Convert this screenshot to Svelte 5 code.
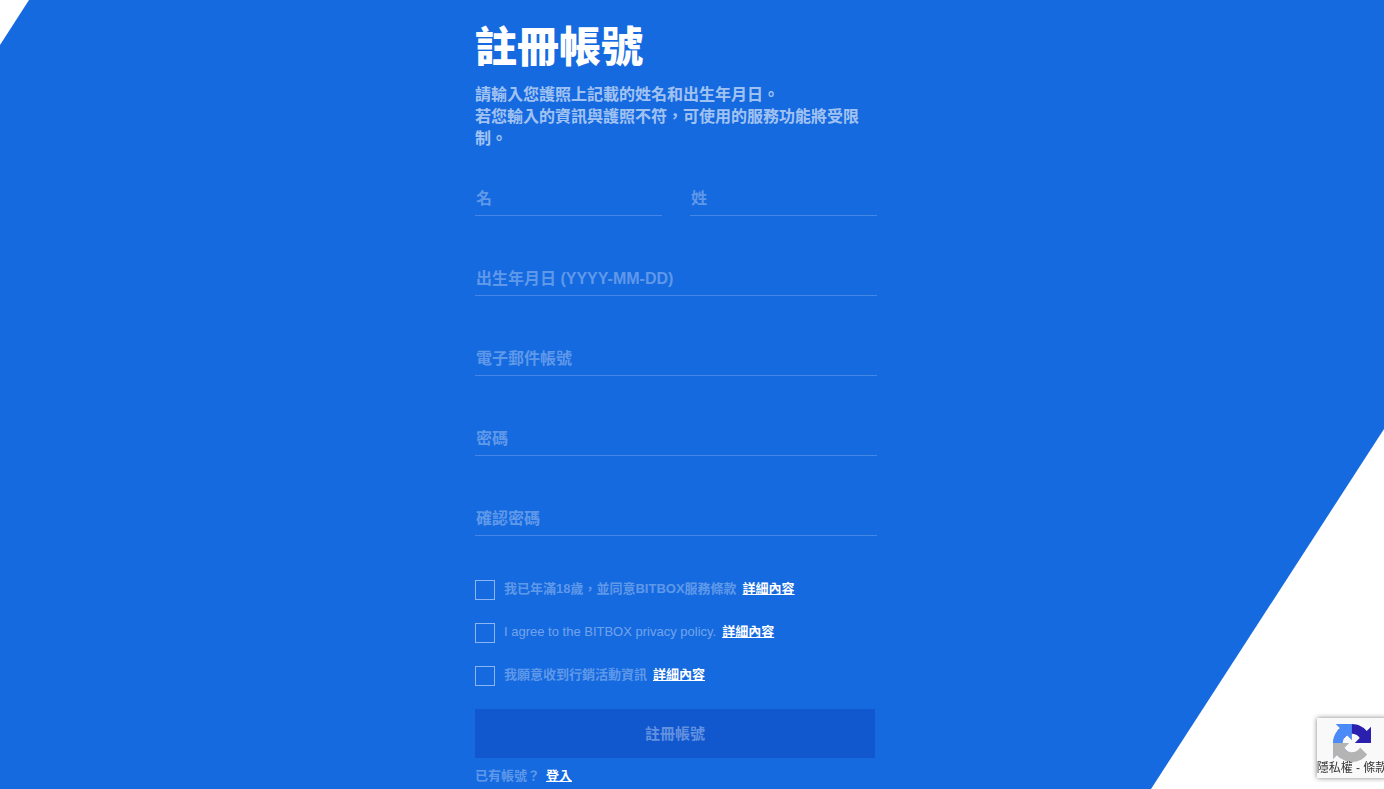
<script lang="ts">
	interface Field {
		id: string;
		label: string;
		type: 'text' | 'email' | 'password';
		half?: boolean;
	}

	const fields: Field[] = [
		{ id: 'first-name', label: '名', type: 'text', half: true },
		{ id: 'last-name', label: '姓', type: 'text', half: true },
		{ id: 'birthday', label: '出生年月日 (YYYY-MM-DD)', type: 'text' },
		{ id: 'email', label: '電子郵件帳號', type: 'email' },
		{ id: 'password', label: '密碼', type: 'password' },
		{ id: 'password-confirm', label: '確認密碼', type: 'password' }
	];

	const agreements = [
		{ id: 'terms', lang: 'zh-Hant', label: '我已年滿18歲，並同意BITBOX服務條款' },
		{ id: 'privacy', lang: 'en', label: 'I agree to the BITBOX privacy policy.' },
		{ id: 'marketing', lang: 'zh-Hant', label: '我願意收到行銷活動資訊' }
	];

	let values: Record<string, string> = $state({});
	let agreed: Record<string, boolean> = $state({ terms: false, privacy: false, marketing: false });

	let ready = $derived(fields.every((f) => values[f.id]) && agreed.terms && agreed.privacy);
</script>

<div class="page" lang="zh-Hant">
	<main class="signup">
		<h1>註冊帳號</h1>
		<p class="intro">
			請輸入您護照上記載的姓名和出生年月日。<br />若您輸入的資訊與護照不符，可使用的服務功能將受限制。
		</p>

		<form onsubmit={(e) => e.preventDefault()}>
			<div class="fields">
				{#each fields as field (field.id)}
					<input
						class="field"
						class:half={field.half}
						id={field.id}
						type={field.type}
						placeholder={field.label}
						aria-label={field.label}
						bind:value={values[field.id]}
					/>
				{/each}
			</div>

			<div class="agreements">
				{#each agreements as item (item.id)}
					<div class="agreement">
						<input type="checkbox" id={item.id} bind:checked={agreed[item.id]} />
						<div class="agreement-text">
							<label for={item.id} class:latin={item.lang === 'en'} lang={item.lang}>{item.label}</label>
							<a href="#{item.id}">詳細內容</a>
						</div>
					</div>
				{/each}
			</div>

			<button class="submit" type="submit" disabled={!ready}>註冊帳號</button>
		</form>

		<p class="login">
			<span>已有帳號？</span>
			<a href="#login">登入</a>
		</p>
	</main>

	<aside class="captcha">
		<svg viewBox="0 0 64 64" aria-hidden="true">
			<path fill="#2a1fae" d="M64 31.955l-.033-1.37V4.687l-7.16 7.16C50.948 4.674 42.033.093 32.05.093c-10.4 0-19.622 4.96-25.458 12.64l11.736 11.86a15.55 15.55 0 0 1 4.754-5.334c2.05-1.6 4.952-2.906 8.968-2.906.485 0 .86.057 1.135.163 4.976.393 9.288 3.14 11.828 7.124l-8.307 8.307L64 31.953" />
			<path fill="#4a8bf8" d="M31.862.094l-1.37.033H4.594l7.16 7.16C4.58 13.147 0 22.06 0 32.046c0 10.4 4.96 19.622 12.64 25.458L24.5 45.768a15.55 15.55 0 0 1-5.334-4.754c-1.6-2.05-2.906-4.952-2.906-8.968 0-.485.057-.86.163-1.135.393-4.976 3.14-9.288 7.124-11.828l8.307 8.307L31.86.095" />
			<path fill="#b4b4b4" d="M.001 32.045l.033 1.37v25.898l7.16-7.16c5.86 7.173 14.774 11.754 24.76 11.754 10.4 0 19.622-4.96 25.458-12.64l-11.736-11.86a15.55 15.55 0 0 1-4.754 5.334c-2.05 1.6-4.952 2.906-8.968 2.906-.485 0-.86-.057-1.135-.163-4.976-.393-9.288-3.14-11.828-7.124l8.307-8.307c-10.522.04-22.4.066-27.295-.005" />
		</svg>
		<div class="captcha-links">
			<a href="#privacy-policy">隱私權</a> - <a href="#captcha-terms">條款</a>
		</div>
	</aside>
</div>

<style>
	:global(body) {
		background: #fff;
	}

	.page {
		position: relative;
		box-sizing: border-box;
		min-height: 100vh;
		padding: 18px 32px 0 0;
		font-family: 'Liberation Sans', 'Noto Sans CJK TC', sans-serif;
		font-weight: 700;
		color: #fff;
	}

	/* slanted blue panel behind the form */
	.page::before {
		content: '';
		position: absolute;
		inset: 0;
		z-index: -1;
		background: #166ae0;
		clip-path: polygon(29px 0, 100% 0, 100% 429px, calc(100% - 233px) 100%, 0 100%, 0 45px);
	}

	.signup {
		max-width: 402px;
		margin: 0 auto;
	}

	h1 {
		margin: 0 0 6px;
		font-size: 42px;
		font-weight: 900;
		line-height: 60px;
	}

	.intro {
		margin: 0 0 30px;
		font-size: 16px;
		line-height: 22px;
		color: rgba(255, 255, 255, 0.62);
	}

	.fields {
		display: flex;
		flex-wrap: wrap;
		gap: 44px 28px;
	}

	.field {
		box-sizing: border-box;
		flex: 1 0 100%;
		min-width: 0;
		height: 36px;
		padding: 3px 1px 1px;
		border: 0;
		border-bottom: 1px solid rgba(255, 255, 255, 0.2);
		border-radius: 0;
		outline: 0;
		background: transparent;
		font: inherit;
		font-size: 16px;
		color: #fff;
	}

	.field.half {
		flex-basis: 40%;
	}

	.field::placeholder {
		color: rgba(255, 255, 255, 0.32);
		opacity: 1;
	}

	.agreements {
		display: flex;
		flex-direction: column;
		gap: 23px;
		margin: 44px 0 23px;
	}

	.agreement {
		display: flex;
		gap: 9px;
		height: 20px;
	}

	.agreement input {
		appearance: none;
		flex: none;
		box-sizing: border-box;
		width: 20px;
		height: 20px;
		margin: 0;
		border: 1px solid rgba(255, 255, 255, 0.5);
		cursor: pointer;
	}

	.agreement input:checked {
		background: #fff;
		box-shadow: inset 0 0 0 4px #166ae0;
	}

	.agreement-text,
	.login {
		display: flex;
		gap: 6px;
		font-size: 13px;
		line-height: 18px;
		color: rgba(255, 255, 255, 0.32);
	}

	.agreement-text .latin {
		font-weight: 400;
		color: rgba(255, 255, 255, 0.4);
	}

	.agreement a,
	.login a {
		color: #fff;
		text-decoration: underline;
	}

	.submit {
		display: block;
		width: calc(100% - 2px);
		height: 49px;
		padding: 0 0 2px;
		border: 0;
		background: #1158cf;
		font: inherit;
		font-size: 15px;
		color: #fff;
		cursor: pointer;
	}

	.submit:disabled {
		color: rgba(255, 255, 255, 0.36);
		cursor: default;
	}

	.login {
		margin: 9px 0 0;
	}

	.captcha {
		position: fixed;
		right: -3px;
		bottom: 11px;
		display: flex;
		flex-direction: column;
		align-items: center;
		box-sizing: border-box;
		width: 70px;
		height: 60px;
		padding-top: 6px;
		background: #f9f9f9;
		box-shadow: 0 0 5px #808080;
	}

	.captcha svg {
		width: 38px;
		height: 38px;
	}

	.captcha-links {
		font-size: 12px;
		font-weight: 400;
		line-height: 12px;
		white-space: nowrap;
		color: #333;
	}

	.captcha-links a {
		color: inherit;
		text-decoration: none;
	}
</style>
